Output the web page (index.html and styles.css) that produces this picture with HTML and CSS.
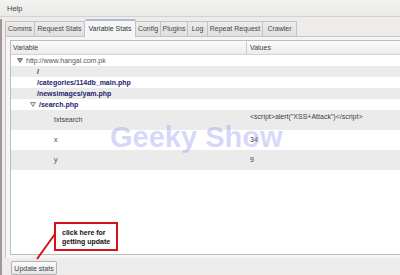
FILE: index.html
```html
<!DOCTYPE html>
<html lang="en">
<head>
  <meta charset="UTF-8">
  <title>Variable Stats</title>
  <link rel="stylesheet" href="styles.css">
</head>
<body>
  <!-- Menu bar -->
  <div class="menubar">Help</div>

  <div class="main">
    <!-- Tabs -->
    <div class="tabs">
      <span class="tab w-comms">Comms</span>
      <span class="tab w-req">Request Stats</span>
      <span class="tab active w-var">Variable Stats</span>
      <span class="tab w-config">Config</span>
      <span class="tab w-plugins">Plugins</span>
      <span class="tab w-log">Log</span>
      <span class="tab w-repeat">Repeat Request</span>
      <span class="tab w-crawler">Crawler</span>
    </div>

    <!-- Tree of variables -->
    <div class="panel">
      <div class="tree">
        <div class="row head">
          <div class="c1">Variable</div>
          <div class="c2">Values</div>
        </div>
        <div class="row">
          <div class="c1 host"><svg class="exp" width="6" height="5"><path d="M0.5 0.5h5l-2.5 4z" fill="#9a9a9a" stroke="#7a7a7a" stroke-width="1"/></svg>http://www.hangal.com.pk</div>
          <div class="c2"></div>
        </div>
        <div class="row alt">
          <div class="c1 path">/</div>
          <div class="c2"></div>
        </div>
        <div class="row">
          <div class="c1 path">/categories/114db_main.php</div>
          <div class="c2"></div>
        </div>
        <div class="row alt">
          <div class="c1 path">/newsimages/yam.php</div>
          <div class="c2"></div>
        </div>
        <div class="row">
          <div class="c1 path sub"><svg class="exp" width="6" height="5"><path d="M0.5 0.5h5l-2.5 4z" fill="#e6e6e6" stroke="#8a8a8a" stroke-width="1"/></svg>/search.php</div>
          <div class="c2"></div>
        </div>
        <div class="row tall alt">
          <div class="c1 var">txtsearch</div>
          <div class="c2">&lt;script&gt;alert("XSS+Attack")&lt;/script&gt;</div>
        </div>
        <div class="row tall">
          <div class="c1 var">x</div>
          <div class="c2 low">34</div>
        </div>
        <div class="row tall alt">
          <div class="c1 var">y</div>
          <div class="c2 low">9</div>
        </div>
      </div>
    </div>

    <!-- Bottom bar -->
    <div class="footer">
      <button class="update">Update stats</button>
    </div>
  </div>

  <!-- Overlays -->
  <div class="watermark">Geeky Show</div>
  <div class="note">click here for<br>getting update</div>
  <svg class="arrow" width="400" height="275"><line x1="55" y1="234" x2="37" y2="259" stroke="#d3101c" stroke-width="2"/></svg>
</body>
</html>
```

FILE: styles.css
```css
/* Base */
body {
  margin: 0;
  height: 275px;
  overflow: hidden;
  position: relative;
  background: #edeceb;
  font-family: "Liberation Sans", Arial, sans-serif;
  font-size: 7px;
  color: #3e3e3e;
}

/* Menu bar */
.menubar {
  height: 16px;
  line-height: 17px;
  padding-left: 7px;
  font-size: 7.5px;
  color: #444;
  background: linear-gradient(#f3f3f2, #e9e9e8);
  border-bottom: 1px solid #d2d2d2;
}

.main {
  border-left: 2px solid #a39696;
}

/* Tabs */
.tabs {
  display: flex;
  align-items: flex-end;
  height: 17px;
  margin-top: 2px;
  padding-left: 3px;
}
.tab {
  box-sizing: border-box;
  height: 15px;
  line-height: 14px;
  text-align: center;
  color: #474747;
  background: linear-gradient(#ececec, #dfdfdf);
  border: 1px solid #c3c3c3;
  border-left: none;
  border-bottom: none;
}
.tab:first-child { border-left: 1px solid #c3c3c3; }
.tab.active {
  height: 18px;
  line-height: 16px;
  margin-bottom: -1px;
  color: #333;
  background: #f6f6f6;
  border-top: 2px solid #aabbd2;
  border-radius: 2px 2px 0 0;
  position: relative;
}
.w-comms { width: 30px; }
.w-req { width: 50px; }
.w-var { width: 51px; }
.w-config { width: 25px; }
.w-plugins { width: 27px; }
.w-log { width: 20px; }
.w-repeat { width: 55px; }
.w-crawler { width: 34px; }

/* Panel + tree */
.panel {
  height: 218px;
  margin-left: 3px;
  padding: 3px 0 0 4px;
  background: #f5f5f5;
  border-top: 1px solid #c4c4c4;
  border-left: 1px solid #c4c4c4;
}
.tree {
  height: 213px;
  background: #fff;
  border: 1px solid #bdbdbd;
  border-right: none;
}
.row {
  display: flex;
  height: 11px;
  line-height: 11px;
  background: #fff;
}
.row.alt { background: #ebebeb; }
.row.head {
  height: 13px;
  line-height: 14px;
  background: linear-gradient(#fbfbfb, #ebebeb);
  border-bottom: 1px solid #d3d3d3;
}
.c1 {
  width: 236px;
  padding-left: 2px;
  box-sizing: border-box;
  white-space: nowrap;
}
.head .c1 { border-right: 1px solid #cdcdcd; }
.c2 {
  padding-left: 3px;
  white-space: nowrap;
}
.host { padding-left: 6px; color: #575757; }
.exp { margin-right: 3px; vertical-align: 0; }
.path {
  padding-left: 26px;
  font-weight: bold;
  color: #24246e;
}
.path.sub { padding-left: 19px; }
.row.tall { height: 20px; }
.tall .c1 { line-height: 20px; }
.var { padding-left: 43px; color: #444; }
.tall .c2 { padding-top: 1px; }
.tall .c2.low { padding-top: 4px; }

/* Bottom bar */
.footer {
  height: 20px;
  padding: 3px 0 0 9px;
  box-sizing: border-box;
}
.update {
  height: 14px;
  width: 46px;
  padding: 0;
  font-family: "Liberation Sans", Arial, sans-serif;
  font-size: 7px;
  color: #444;
  background: linear-gradient(#fafafa, #e6e6e6);
  border: 1px solid #b3b3b3;
  border-radius: 2px;
}

/* Overlays */
.watermark {
  position: absolute;
  left: 110px;
  top: 121px;
  font-size: 29px;
  font-weight: bold;
  color: rgba(150, 150, 240, 0.38);
  pointer-events: none;
}
.note {
  position: absolute;
  left: 54px;
  top: 222px;
  padding: 4px 0 0 6px;
  box-sizing: content-box;
  width: 54px;
  height: 21px;
  line-height: 9px;
  font-weight: bold;
  font-size: 7px;
  color: #111;
  background: #fff;
  border: 2px solid #d3101c;
}
.arrow {
  position: absolute;
  left: 0;
  top: 0;
}
```
